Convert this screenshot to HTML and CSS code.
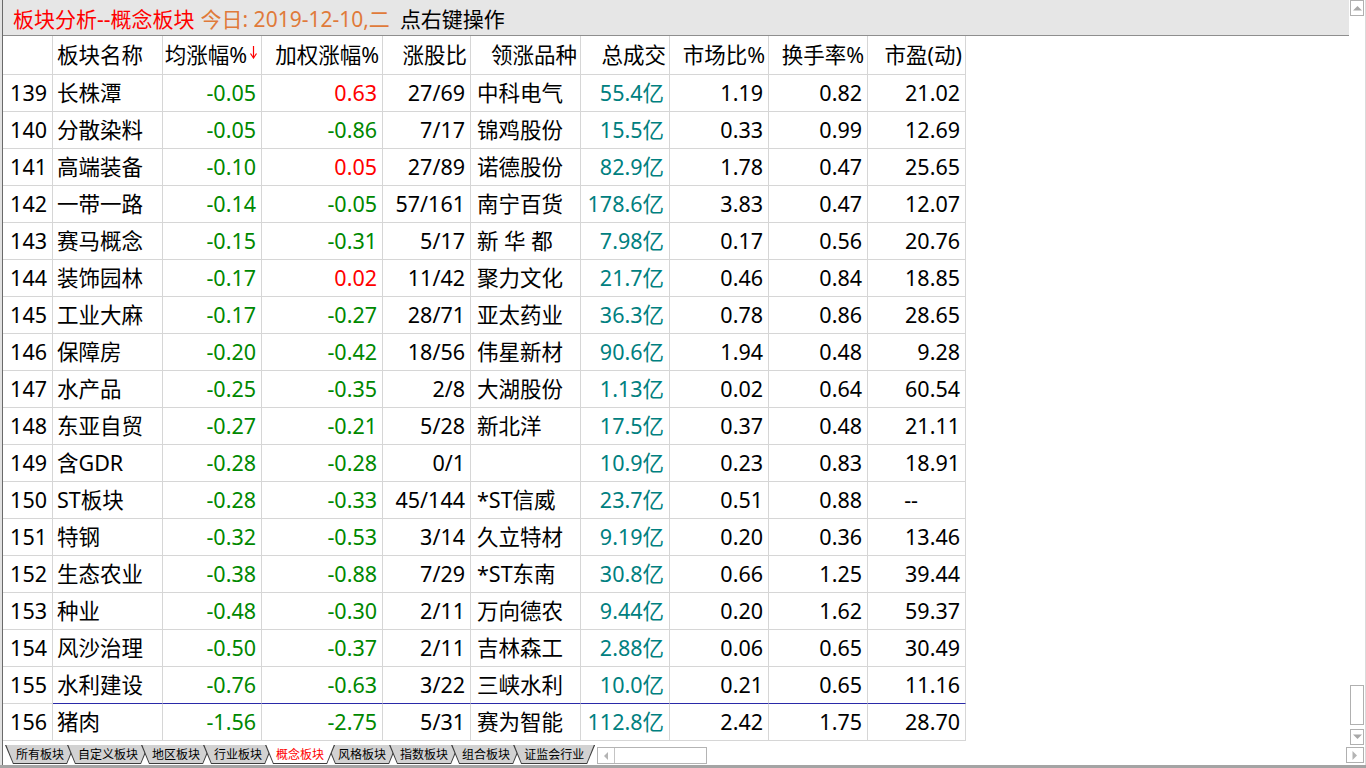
FILE: index.html
```html
<!DOCTYPE html>
<html lang="zh-CN">
<head>
<meta charset="utf-8">
<title>板块分析</title>
<link rel="stylesheet" href="styles.css">
</head>
<body>
<div class="app">
  <div class="frame">
    <div class="leftedge"></div>
    <div class="main">
      <div class="title">
        <span class="t-red">板块分析--概念板块</span>
        <span class="t-orange">今日: 2019-12-10,二</span>
        <span class="t-black">点右键操作</span>
      </div>
      <div class="table">
        <div class="row head">
          <div class="c"></div>
          <div class="c l">板块名称</div>
          <div class="c">均涨幅%<svg class="sortarrow" width="7" height="14" viewBox="0 0 7 14"><path d="M3.5 1V12" stroke="#ff0000" stroke-width="1.2" fill="none"/><path d="M0.5 8.5L3.5 13L6.5 8.5" stroke="#ff0000" stroke-width="1.2" fill="none"/></svg></div>
          <div class="c">加权涨幅%</div>
          <div class="c">涨股比</div>
          <div class="c">领涨品种</div>
          <div class="c">总成交</div>
          <div class="c">市场比%</div>
          <div class="c">换手率%</div>
          <div class="c">市盈(动)</div>
        </div>
        <div class="row"><div class="c">139</div><div class="c l">长株潭</div><div class="c g">-0.05</div><div class="c r">0.63</div><div class="c">27/69</div><div class="c l2">中科电气</div><div class="c t">55.4亿</div><div class="c">1.19</div><div class="c">0.82</div><div class="c">21.02</div></div>
        <div class="row"><div class="c">140</div><div class="c l">分散染料</div><div class="c g">-0.05</div><div class="c g">-0.86</div><div class="c">7/17</div><div class="c l2">锦鸡股份</div><div class="c t">15.5亿</div><div class="c">0.33</div><div class="c">0.99</div><div class="c">12.69</div></div>
        <div class="row"><div class="c">141</div><div class="c l">高端装备</div><div class="c g">-0.10</div><div class="c r">0.05</div><div class="c">27/89</div><div class="c l2">诺德股份</div><div class="c t">82.9亿</div><div class="c">1.78</div><div class="c">0.47</div><div class="c">25.65</div></div>
        <div class="row"><div class="c">142</div><div class="c l">一带一路</div><div class="c g">-0.14</div><div class="c g">-0.05</div><div class="c">57/161</div><div class="c l2">南宁百货</div><div class="c t">178.6亿</div><div class="c">3.83</div><div class="c">0.47</div><div class="c">12.07</div></div>
        <div class="row"><div class="c">143</div><div class="c l">赛马概念</div><div class="c g">-0.15</div><div class="c g">-0.31</div><div class="c">5/17</div><div class="c l2">新 华 都</div><div class="c t">7.98亿</div><div class="c">0.17</div><div class="c">0.56</div><div class="c">20.76</div></div>
        <div class="row"><div class="c">144</div><div class="c l">装饰园林</div><div class="c g">-0.17</div><div class="c r">0.02</div><div class="c">11/42</div><div class="c l2">聚力文化</div><div class="c t">21.7亿</div><div class="c">0.46</div><div class="c">0.84</div><div class="c">18.85</div></div>
        <div class="row"><div class="c">145</div><div class="c l">工业大麻</div><div class="c g">-0.17</div><div class="c g">-0.27</div><div class="c">28/71</div><div class="c l2">亚太药业</div><div class="c t">36.3亿</div><div class="c">0.78</div><div class="c">0.86</div><div class="c">28.65</div></div>
        <div class="row"><div class="c">146</div><div class="c l">保障房</div><div class="c g">-0.20</div><div class="c g">-0.42</div><div class="c">18/56</div><div class="c l2">伟星新材</div><div class="c t">90.6亿</div><div class="c">1.94</div><div class="c">0.48</div><div class="c">9.28</div></div>
        <div class="row"><div class="c">147</div><div class="c l">水产品</div><div class="c g">-0.25</div><div class="c g">-0.35</div><div class="c">2/8</div><div class="c l2">大湖股份</div><div class="c t">1.13亿</div><div class="c">0.02</div><div class="c">0.64</div><div class="c">60.54</div></div>
        <div class="row"><div class="c">148</div><div class="c l">东亚自贸</div><div class="c g">-0.27</div><div class="c g">-0.21</div><div class="c">5/28</div><div class="c l2">新北洋</div><div class="c t">17.5亿</div><div class="c">0.37</div><div class="c">0.48</div><div class="c">21.11</div></div>
        <div class="row"><div class="c">149</div><div class="c l">含GDR</div><div class="c g">-0.28</div><div class="c g">-0.28</div><div class="c">0/1</div><div class="c l2"></div><div class="c t">10.9亿</div><div class="c">0.23</div><div class="c">0.83</div><div class="c">18.91</div></div>
        <div class="row"><div class="c">150</div><div class="c l">ST板块</div><div class="c g">-0.28</div><div class="c g">-0.33</div><div class="c">45/144</div><div class="c l2">*ST信威</div><div class="c t">23.7亿</div><div class="c">0.51</div><div class="c">0.88</div><div class="c dash">--</div></div>
        <div class="row"><div class="c">151</div><div class="c l">特钢</div><div class="c g">-0.32</div><div class="c g">-0.53</div><div class="c">3/14</div><div class="c l2">久立特材</div><div class="c t">9.19亿</div><div class="c">0.20</div><div class="c">0.36</div><div class="c">13.46</div></div>
        <div class="row"><div class="c">152</div><div class="c l">生态农业</div><div class="c g">-0.38</div><div class="c g">-0.88</div><div class="c">7/29</div><div class="c l2">*ST东南</div><div class="c t">30.8亿</div><div class="c">0.66</div><div class="c">1.25</div><div class="c">39.44</div></div>
        <div class="row"><div class="c">153</div><div class="c l">种业</div><div class="c g">-0.48</div><div class="c g">-0.30</div><div class="c">2/11</div><div class="c l2">万向德农</div><div class="c t">9.44亿</div><div class="c">0.20</div><div class="c">1.62</div><div class="c">59.37</div></div>
        <div class="row"><div class="c">154</div><div class="c l">风沙治理</div><div class="c g">-0.50</div><div class="c g">-0.37</div><div class="c">2/11</div><div class="c l2">吉林森工</div><div class="c t">2.88亿</div><div class="c">0.06</div><div class="c">0.65</div><div class="c">30.49</div></div>
        <div class="row mark"><div class="c">155</div><div class="c l">水利建设</div><div class="c g">-0.76</div><div class="c g">-0.63</div><div class="c">3/22</div><div class="c l2">三峡水利</div><div class="c t">10.0亿</div><div class="c">0.21</div><div class="c">0.65</div><div class="c">11.16</div></div>
        <div class="row"><div class="c">156</div><div class="c l">猪肉</div><div class="c g">-1.56</div><div class="c g">-2.75</div><div class="c">5/31</div><div class="c l2">赛为智能</div><div class="c t">112.8亿</div><div class="c">2.42</div><div class="c">1.75</div><div class="c">28.70</div></div>
      </div>
      <div class="tabs">
        <div class="tab">所有板块</div>
        <div class="tab">自定义板块</div>
        <div class="tab">地区板块</div>
        <div class="tab">行业板块</div>
        <div class="tab active">概念板块</div>
        <div class="tab">风格板块</div>
        <div class="tab">指数板块</div>
        <div class="tab">组合板块</div>
        <div class="tab">证监会行业</div>
        <div class="hscroll">
          <div class="hs-btn"><svg width="6" height="8" viewBox="0 0 6 8"><path d="M5 0L1 4L5 8Z" fill="#b4b4b4"/></svg></div>
        </div>
      </div>
    </div>
    <div class="vscroll">
      <div class="sbtn"><svg width="9" height="6" viewBox="0 0 9 6"><path d="M0 5.5H9L4.5 1Z" fill="#a8a8a8"/></svg></div>
      <div class="spacer"></div>
      <div class="thumb"></div>
      <div class="sbtn down"><svg width="9" height="6" viewBox="0 0 9 6"><path d="M0 0.5H9L4.5 5Z" fill="#a8a8a8"/></svg></div>
      <div class="sbtn right"><svg width="6" height="9" viewBox="0 0 6 9"><path d="M0.5 0V9L5 4.5Z" fill="#b4b4b4"/></svg></div>
    </div>
  </div>
  <div class="bottombar"></div>
</div>
</body>
</html>
```

FILE: styles.css
```css
html, body {
  margin: 0;
  padding: 0;
}
body {
  width: 1366px;
  height: 768px;
  overflow: hidden;
  background: #ffffff;
  font-family: "Noto Sans", "Noto Sans CJK SC", sans-serif;
  color: #000;
}
.app {
  display: flex;
  flex-direction: column;
  height: 768px;
}
.frame {
  display: flex;
  height: 765px;
}
.leftedge {
  width: 3px;
  box-sizing: border-box;
  background: #e2e2e2;
  border-right: 1px solid #6a6a6a;
}
.main {
  width: 1346px;
  display: flex;
  flex-direction: column;
}
.title {
  height: 36px;
  box-sizing: border-box;
  background: #e6e6e6;
  border-bottom: 1px solid #8e8e8e;
  display: flex;
  align-items: center;
  padding-left: 10px;
  font-size: 21px;
  white-space: nowrap;
}
.t-red { color: #ff0000; }
.t-orange { color: #e07a3a; margin-left: 6px; }
.t-black { color: #000; margin-left: 10px; }

.table {
  height: 705px;
  display: flex;
  flex-direction: column;
}
.row {
  display: grid;
  grid-template-columns: 50px 110px 99px 121px 88px 110px 89px 99px 99px 98px;
  height: 37px;
}
.row.head {
  height: 39px;
}
.c {
  box-sizing: border-box;
  border-right: 1px solid #d6d6d6;
  border-bottom: 1px solid #d6d6d6;
  font-size: 21.5px;
  line-height: 36px;
  text-align: right;
  padding-right: 5px;
  white-space: nowrap;
  overflow: hidden;
}
.head .c {
  line-height: 38px;
  padding-right: 3px;
}
.head .c:nth-child(3) {
  padding-right: 4px;
}
.c.l {
  text-align: left;
  padding-left: 4px;
  padding-right: 0;
}
.head .c.l {
  padding-left: 4px;
}
.c.l2 {
  text-align: left;
  padding-left: 6px;
  padding-right: 0;
}
.c.g { color: #008800; }
.c.r { color: #ff0000; }
.c.t { color: #008080; }
.c.dash { padding-right: 47px; }
.row.mark .c:not(:first-child) {
  border-bottom-color: #2a2aa8;
}
.sortarrow {
  margin-left: 3px;
  vertical-align: 4px;
}

.tabs {
  height: 24px;
  display: flex;
  align-items: flex-start;
  padding-left: 2px;
  padding-top: 4px;
  box-sizing: border-box;
}
.tab {
  position: relative;
  height: 19px;
  padding-left: 11px;
  padding-right: 3px;
  font-size: 12px;
  line-height: 18px;
  font-family: "Noto Sans CJK SC", sans-serif;
  white-space: nowrap;
  z-index: 1;
}
.tab::before,
.tab::after {
  content: "";
  position: absolute;
  top: 0;
  bottom: 0;
  left: 0;
  right: -8px;
  z-index: -1;
}
.tab::before {
  background: #3c3c3c;
  clip-path: polygon(0 0, 100% 0, calc(100% - 8px) 100%, 8px 100%);
}
.tab::after {
  background: #d2d2d2;
  clip-path: polygon(1.3px 0, calc(100% - 1.3px) 0, calc(100% - 8.5px) calc(100% - 1px), 8.5px calc(100% - 1px));
}
.tab.active {
  color: #ff0000;
  z-index: 5;
}
.tab.active::after {
  background: #ffffff;
}
.hscroll {
  margin-left: 10px;
  margin-top: 2px;
  width: 110px;
  height: 17px;
  box-sizing: border-box;
  border: 1px solid #b4b4b4;
  display: flex;
}
.hs-btn {
  width: 17px;
  box-sizing: border-box;
  border-right: 1px solid #c4c4c4;
  display: flex;
  align-items: center;
  justify-content: center;
}

.vscroll {
  width: 17px;
  box-sizing: border-box;
  border-right: 1px solid #dadada;
  display: flex;
  flex-direction: column;
  align-items: flex-start;
}
.sbtn {
  width: 14px;
  height: 16px;
  margin-left: 1px;
  box-sizing: border-box;
  border: 1px solid #b0b0b0;
  background: #fff;
  display: flex;
  align-items: center;
  justify-content: center;
}
.spacer { flex: 1; }
.thumb {
  width: 14px;
  height: 40px;
  margin-left: 1px;
  box-sizing: border-box;
  border: 1px solid #b0b0b0;
  background: #fff;
}
.sbtn.down {
  margin-top: 4px;
}
.sbtn.right {
  margin-top: 2px;
  margin-left: -3px;
  width: 18px;
  margin-bottom: 2px;
}
.bottombar {
  height: 3px;
  background: #a4a4a4;
}
```
